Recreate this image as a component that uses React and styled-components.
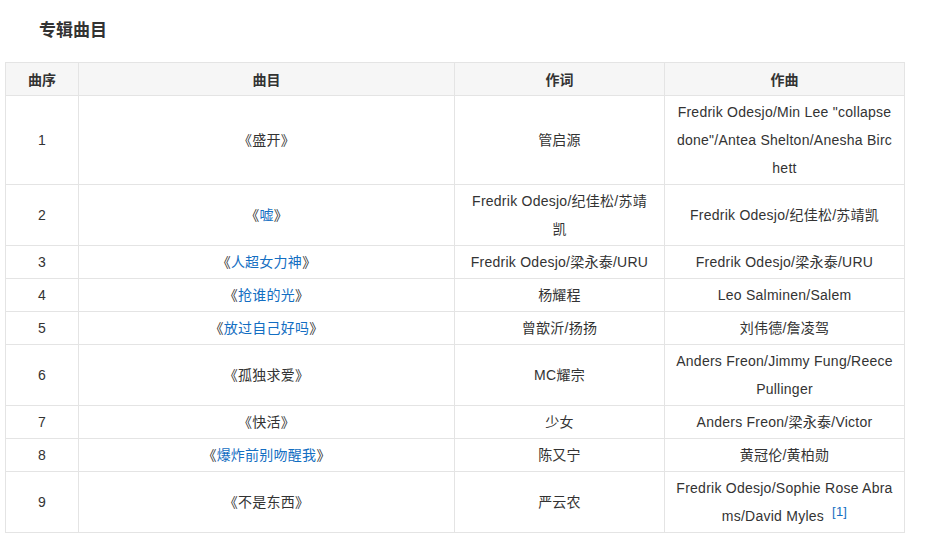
import React from "react";
import styled, { createGlobalStyle } from "styled-components";

const Global = createGlobalStyle`
  html, body { margin: 0; padding: 0; background: #fff; }
  body {
    font-family: "Liberation Sans", Arial, "Noto Sans CJK SC", sans-serif;
    color: #333;
  }
`;

const Page = styled.div`
  padding: 17px 5px 0 5px;
  width: 937px;
  box-sizing: border-box;
`;

const Title = styled.h2`
  margin: 0 0 21px 34px;
  font-size: 17px;
  line-height: 24px;
  font-weight: bold;
  color: #333;
  font-family: "Noto Sans CJK SC", sans-serif;
`;

const Table = styled.table`
  border-collapse: collapse;
  table-layout: fixed;
  width: 899px;
  font-size: 14px;
  line-height: 28px;
  letter-spacing: 0.25px;
`;

const Th = styled.th`
  background: #f6f6f6;
  border: 1px solid #e4e4e4;
  padding: 2px 12px;
  font-weight: bold;
  color: #333;
  text-align: center;
  letter-spacing: 0;
  font-family: "Noto Sans CJK SC", sans-serif;
`;

const Td = styled.td`
  border: 1px solid #e4e4e4;
  padding: 2px ${(p) => (p.$wide ? "11px" : "12px")};
  text-align: center;
  vertical-align: middle;
  word-break: break-all;
  color: #333;
`;

const Link = styled.a`
  color: #136ec2;
  text-decoration: none;
`;

const Ref = styled.sup`
  color: #136ec2;
  font-size: 13px;
  line-height: 0;
  margin-left: 8px;
  vertical-align: 5px;
`;

const rows = [
  { n: 1, t: "盛开", link: false, l: "管启源", c: 'Fredrik Odesjo/Min Lee "collapse done"/Antea Shelton/Anesha Birchett' },
  { n: 2, t: "嘘", link: true, l: "Fredrik Odesjo/纪佳松/苏靖凯", c: "Fredrik Odesjo/纪佳松/苏靖凯" },
  { n: 3, t: "人超女力神", link: true, l: "Fredrik Odesjo/梁永泰/URU", c: "Fredrik Odesjo/梁永泰/URU" },
  { n: 4, t: "抢谁的光", link: true, l: "杨耀程", c: "Leo Salminen/Salem" },
  { n: 5, t: "放过自己好吗", link: true, l: "曾歆沂/扬扬", c: "刘伟德/詹凌驾" },
  { n: 6, t: "孤独求爱", link: false, l: "MC耀宗", c: "Anders Freon/Jimmy Fung/Reece Pullinger" },
  { n: 7, t: "快活", link: false, l: "少女", c: "Anders Freon/梁永泰/Victor" },
  { n: 8, t: "爆炸前别吻醒我", link: true, l: "陈又宁", c: "黄冠伦/黄柏勋" },
  { n: 9, t: "不是东西", link: false, l: "严云农", c: "Fredrik Odesjo/Sophie Rose Abrams/David Myles", ref: true },
];

export default function App() {
  return (
    <Page>
      <Global />
      <Title>专辑曲目</Title>
      <Table>
        <colgroup>
          <col style={{ width: 73 }} />
          <col style={{ width: 376 }} />
          <col style={{ width: 210 }} />
          <col style={{ width: 240 }} />
        </colgroup>
        <thead>
          <tr>
            <Th>曲序</Th>
            <Th>曲目</Th>
            <Th>作词</Th>
            <Th>作曲</Th>
          </tr>
        </thead>
        <tbody>
          {rows.map((r) => (
            <tr key={r.n}>
              <Td>{r.n}</Td>
              <Td>
                《{r.link ? <Link href="#">{r.t}</Link> : r.t}》
              </Td>
              <Td>{r.l}</Td>
              <Td $wide>
                {r.c}
                {r.ref && <Ref>[1]</Ref>}
              </Td>
            </tr>
          ))}
        </tbody>
      </Table>
    </Page>
  );
}
